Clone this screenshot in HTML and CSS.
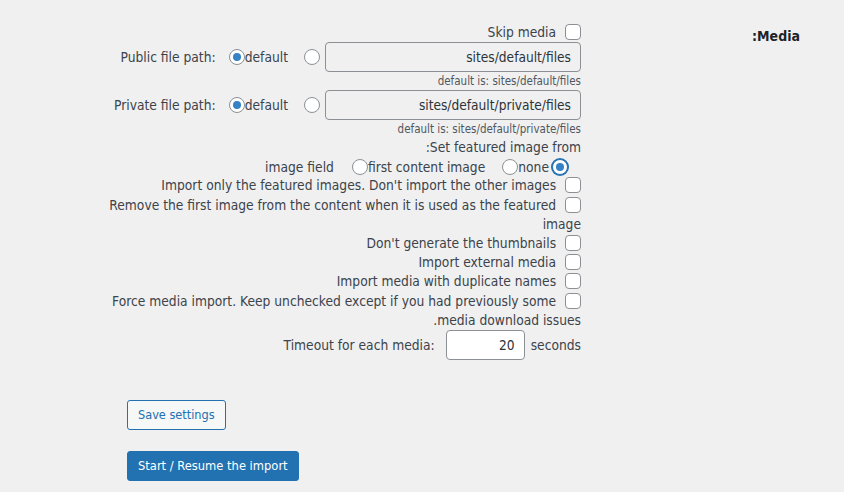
FILE: index.html
```html
<!DOCTYPE html>
<html dir="rtl">
<head>
<meta charset="utf-8">
<link rel="stylesheet" href="styles.css">
</head>
<body>
<div class="wrap">
  <div class="form-table">
    <div class="th">Media:</div>
    <div class="td">
      <div class="line"><input type="checkbox" class="cb"> Skip media</div>
      <div class="row">
        <span class="lbl">Public file path:</span>
        <input type="radio" class="rd" checked><span class="opt">default</span>
        <input type="radio" class="rd rd-gap">
        <input type="text" class="path" value="sites/default/files">
      </div>
      <div class="desc">default is: sites/default/files</div>
      <div class="row">
        <span class="lbl">Private file path:</span>
        <input type="radio" class="rd" checked><span class="opt">default</span>
        <input type="radio" class="rd rd-gap">
        <input type="text" class="path" value="sites/default/private/files">
      </div>
      <div class="desc">default is: sites/default/private/files</div>
      <div class="line">Set featured image from:</div>
      <div class="row row-img">
        <span class="opt opt-img">image field</span>
        <input type="radio" class="rd"><span class="opt opt-first">first content image</span>
        <input type="radio" class="rd"><span class="opt opt-none">none</span>
        <input type="radio" class="rd rd-focus" checked>
      </div>
      <div class="line"><input type="checkbox" class="cb"> Import only the featured images. Don't import the other images</div>
      <div class="line"><input type="checkbox" class="cb"> Remove the first image from the content when it is used as the featured image</div>
      <div class="line"><input type="checkbox" class="cb"> Don't generate the thumbnails</div>
      <div class="line"><input type="checkbox" class="cb"> Import external media</div>
      <div class="line"><input type="checkbox" class="cb"> Import media with duplicate names</div>
      <div class="line"><input type="checkbox" class="cb"> Force media import. Keep unchecked except if you had previously some media download issues.</div>
      <div class="row row-timeout">
        <span class="lbl">Timeout for each media:</span>
        <input type="text" class="num" value="20">
        <span class="unit">seconds</span>
      </div>
    </div>
  </div>
  <div class="actions">
    <button class="btn btn-secondary">Save settings</button>
    <button class="btn btn-primary">Start / Resume the import</button>
  </div>
</div>
</body>
</html>
```

FILE: styles.css
```css
html, body {
  margin: 0;
  padding: 0;
  background: #f0f0f1;
}
body {
  font-family: "DejaVu Sans Condensed", "DejaVu Sans", sans-serif;
  font-size: 13.7px;
  color: #3c434a;
  direction: rtl;
}
.wrap {
  padding: 22px 44px 0 0;
}
.form-table {
  display: flex;
  flex-direction: row;
}
.th {
  width: 200px;
  padding-left: 19px;
  margin-top: 4px;
  line-height: 20px;
  font-size: 14px;
  font-weight: bold;
  color: #1d2327;
}
.td {
  width: 486px;
}
.line {
  line-height: 19.2px;
}
.td > .line:first-child {
  line-height: 20px;
}
.cb {
  -webkit-appearance: none;
  appearance: none;
  width: 16px;
  height: 16px;
  margin: 0 0 0 5px;
  border: 1px solid #8c8f94;
  border-radius: 4px;
  background: #fff;
  vertical-align: -3px;
  box-sizing: border-box;
}
.row {
  direction: ltr;
  display: flex;
  justify-content: flex-end;
  align-items: center;
  height: 30px;
}
.rd {
  -webkit-appearance: none;
  appearance: none;
  width: 16px;
  height: 16px;
  margin: 0;
  border: 1px solid #8c8f94;
  border-radius: 50%;
  background: #fff;
  box-sizing: border-box;
  position: relative;
  flex: none;
}
.rd:checked::before {
  content: "";
  position: absolute;
  left: 3px;
  top: 3px;
  width: 8px;
  height: 8px;
  border-radius: 50%;
  background: #3582c4;
}
.rd-focus {
  border-color: #2271b1;
  box-shadow: 0 0 0 1px #2271b1;
}
.lbl {
  margin-right: 13px;
}
.opt {
  margin-right: 16px;
}
.rd-gap {
  margin-right: 5px;
}
.path {
  width: 256px;
  height: 30px;
  box-sizing: border-box;
  border: 1px solid #8c8f94;
  border-radius: 4px;
  background: transparent;
  padding: 0 9px;
  margin: 0;
  font-family: inherit;
  font-size: 13.6px;
  color: #2c3338;
  text-align: right;
}
.desc {
  height: 18px;
  line-height: 18px;
  font-size: 11.5px;
  color: #50575e;
}
.row-img {
  height: 19.2px;
  padding-right: 13px;
}
.opt-img {
  margin-right: 18px;
}
.opt-first {
  margin-right: 17px;
}
.opt-none {
  margin-right: 3px;
}
.row-timeout {
  height: 30px;
}
.row-timeout .lbl {
  margin-right: 11px;
}
.num {
  width: 79px;
  height: 30px;
  box-sizing: border-box;
  border: 1px solid #8c8f94;
  border-radius: 4px;
  background: #fff;
  padding: 0 9px;
  margin: 0 6px 0 0;
  font-family: inherit;
  font-size: 13.6px;
  color: #2c3338;
  text-align: right;
}
.actions {
  direction: ltr;
  display: flex;
  flex-direction: column;
  align-items: flex-start;
  gap: 21px;
  padding: 40px 0 0 127px;
}
.btn {
  height: 30px;
  padding: 0 10px;
  border-radius: 3px;
  font-family: inherit;
  font-size: 12.6px;
  line-height: 28px;
  cursor: pointer;
  box-sizing: border-box;
}
.btn-secondary {
  border: 1px solid #2271b1;
  background: #f6f7f7;
  color: #2271b1;
}
.btn-primary {
  border: 1px solid #2271b1;
  background: #2271b1;
  color: #fff;
  font-size: 12.8px;
}
```
